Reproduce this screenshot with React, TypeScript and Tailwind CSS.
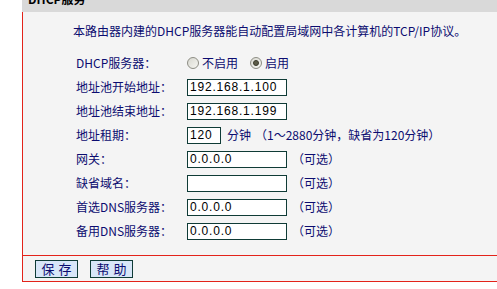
const font = { fontFamily: '"Noto Sans CJK SC", "Liberation Sans", sans-serif' };
const fieldFont = { fontFamily: '"Liberation Sans", Arial, sans-serif' };

function Field({ value, w = 'w-[100px]' }: { value: string; w?: string }) {
  return (
    <div
      className={`${w} h-[17px] border border-[#0f3b36] bg-white flex items-center pl-[2px] text-[12px] leading-none tracking-[0.8px] text-black`}
      style={fieldFont}
    >
      {value}
    </div>
  );
}

function Radio({ checked }: { checked?: boolean }) {
  return (
    <span className="w-[12px] h-[12px] rounded-full border border-[#8d8d84] bg-gradient-to-br from-[#d8d8d0] to-[#f6f6f2] flex items-center justify-center">
      {checked && <span className="w-[6px] h-[6px] rounded-full bg-[#5c5c48] border border-[#3b3b2c]" />}
    </span>
  );
}

function Row({ label, children }: { label: string; children: React.ReactNode }) {
  return (
    <div className="flex items-center h-[24px]">
      <div className="w-[111px] shrink-0">{label}</div>
      {children}
    </div>
  );
}

function Optional() {
  return <span className="ml-[5px]">（可选）</span>;
}

export default function App() {
  return (
    <div className="w-[497px] h-[289px] bg-white overflow-hidden flex text-[12px] leading-none text-[#0c0c70]" style={font}>
      <div className="ml-[22px] flex-1 flex flex-col">
        <div className="h-[12px] bg-[#d9d9d9] overflow-hidden">
          <div className="ml-[6px] -mt-[7px] font-bold text-black text-[12px]">DHCP服务</div>
        </div>
        <div className="border-l border-[#e3231a] bg-[#f4f4f4] flex flex-col">
          <div className="h-[16px] mt-[11px] ml-[50px] flex items-center whitespace-nowrap">
            本路由器内建的DHCP服务器能自动配置局域网中各计算机的TCP/IP协议。
          </div>
          <div className="mt-[12px] ml-[53px] flex flex-col">
            <Row label="DHCP服务器：">
              <div className="flex items-center">
                <Radio />
                <span className="ml-[3px]">不启用</span>
                <span className="ml-[12px]">
                  <Radio checked />
                </span>
                <span className="ml-[3px]">启用</span>
              </div>
            </Row>
            <Row label="地址池开始地址：">
              <Field value="192.168.1.100" />
            </Row>
            <Row label="地址池结束地址：">
              <Field value="192.168.1.199" />
            </Row>
            <Row label="地址租期：">
              <Field value="120" w="w-[34px]" />
              <span className="ml-[6px]">分钟</span>
              <span className="ml-[4px]">（1～2880分钟，缺省为120分钟）</span>
            </Row>
            <Row label="网关：">
              <Field value="0.0.0.0" />
              <Optional />
            </Row>
            <Row label="缺省域名：">
              <Field value="" />
              <Optional />
            </Row>
            <Row label="首选DNS服务器：">
              <Field value="0.0.0.0" />
              <Optional />
            </Row>
            <Row label="备用DNS服务器：">
              <Field value="0.0.0.0" />
              <Optional />
            </Row>
          </div>
          <div className="mt-[12px] border-t border-b border-[#e3231a] h-[27px] flex items-center pl-[12px] gap-[12px]">
            <button className="w-[43px] h-[18px] border border-[#0f3b36] bg-[#d8e6f8] text-[13px] leading-none text-[#0c0c70] tracking-[4px] pl-[4px]">
              保存
            </button>
            <button className="w-[43px] h-[18px] border border-[#0f3b36] bg-[#d8e6f8] text-[13px] leading-none text-[#0c0c70] tracking-[4px] pl-[4px]">
              帮助
            </button>
          </div>
        </div>
      </div>
    </div>
  );
}
